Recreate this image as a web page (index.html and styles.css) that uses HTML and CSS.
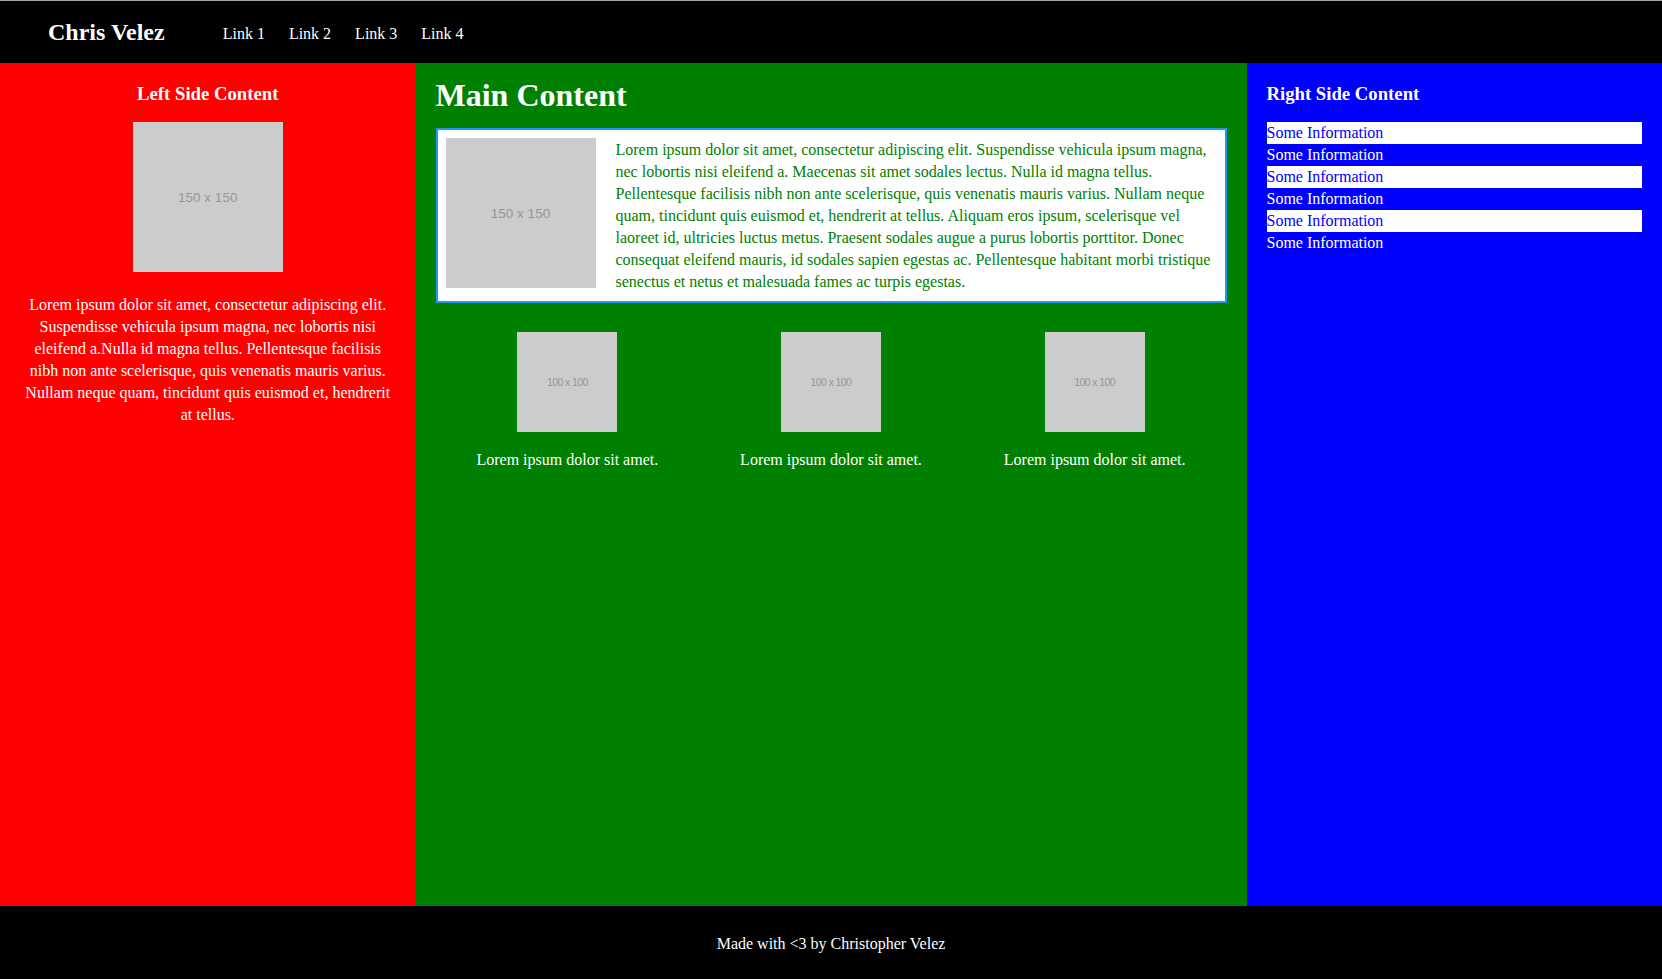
FILE: index.html
```html
<!DOCTYPE html>
<html lang="en">
<head>
<meta charset="utf-8">
<title>Chris Velez</title>
<link rel="stylesheet" href="styles.css">
</head>
<body>
<header class="site-header">
  <div class="logo">Chris Velez</div>
  <nav class="nav">
    <a href="#" class="nav-link">Link 1</a>
    <a href="#" class="nav-link">Link 2</a>
    <a href="#" class="nav-link">Link 3</a>
    <a href="#" class="nav-link">Link 4</a>
  </nav>
</header>
<main class="layout">
  <aside class="col col-left">
    <h3 class="side-title">Left Side Content</h3>
    <div class="ph ph-150">150 x 150</div>
    <p class="left-text">Lorem ipsum dolor sit amet, consectetur adipiscing elit. Suspendisse vehicula ipsum magna, nec lobortis nisi eleifend a.Nulla id magna tellus. Pellentesque facilisis nibh non ante scelerisque, quis venenatis mauris varius. Nullam neque quam, tincidunt quis euismod et, hendrerit at tellus.</p>
  </aside>
  <section class="col col-main">
    <h1 class="main-title">Main Content</h1>
    <div class="card">
      <div class="ph ph-150 card-img">150 x 150</div>
      <p class="card-text">Lorem ipsum dolor sit amet, consectetur adipiscing elit. Suspendisse vehicula ipsum magna, nec lobortis nisi eleifend a. Maecenas sit amet sodales lectus. Nulla id magna tellus. Pellentesque facilisis nibh non ante scelerisque, quis venenatis mauris varius. Nullam neque quam, tincidunt quis euismod et, hendrerit at tellus. Aliquam eros ipsum, scelerisque vel laoreet id, ultricies luctus metus. Praesent sodales augue a purus lobortis porttitor. Donec consequat eleifend mauris, id sodales sapien egestas ac. Pellentesque habitant morbi tristique senectus et netus et malesuada fames ac turpis egestas.</p>
    </div>
    <div class="features">
      <div class="feature">
        <div class="ph ph-100">100 x 100</div>
        <p class="feature-text">Lorem ipsum dolor sit amet.</p>
      </div>
      <div class="feature">
        <div class="ph ph-100">100 x 100</div>
        <p class="feature-text">Lorem ipsum dolor sit amet.</p>
      </div>
      <div class="feature">
        <div class="ph ph-100">100 x 100</div>
        <p class="feature-text">Lorem ipsum dolor sit amet.</p>
      </div>
    </div>
  </section>
  <aside class="col col-right">
    <h3 class="side-title">Right Side Content</h3>
    <ul class="info-list">
      <li class="info-item">Some Information</li>
      <li class="info-item">Some Information</li>
      <li class="info-item">Some Information</li>
      <li class="info-item">Some Information</li>
      <li class="info-item">Some Information</li>
      <li class="info-item">Some Information</li>
    </ul>
  </aside>
</main>
<footer class="site-footer">Made with &lt;3 by Christopher Velez</footer>
</body>
</html>
```
FILE: styles.css
```css
* { box-sizing: border-box; }

html, body { height: 100%; }

body {
  margin: 0;
  min-height: 100vh;
  display: flex;
  flex-direction: column;
  font-family: "Liberation Serif", "Times New Roman", serif;
  font-size: 16px;
  color: #fff;
  background: #000;
}

.site-header {
  height: 63px;
  flex-shrink: 0;
  border-top: 1px solid #a3a3a3;
  background: #000;
  display: flex;
  align-items: center;
  padding: 0 0 0 48px;
}

.logo {
  font-size: 24px;
  font-weight: bold;
  color: #fff;
}

.nav {
  margin-left: 58px;
  padding-top: 3px;
  display: flex;
  gap: 24px;
}

.nav-link {
  color: #fff;
  text-decoration: none;
  font-size: 16px;
}

.layout {
  flex: 1;
  display: grid;
  grid-template-columns: 1fr 2fr 1fr;
}

.col { padding: 20px; }

.col-left {
  background: #ff0000;
  text-align: center;
}

.col-main {
  background: #008000;
  padding-top: 0;
}

.col-right {
  background: #0000ff;
}

.side-title {
  margin: 0 0 17px;
  font-size: 18.72px;
  font-weight: bold;
}

.ph {
  background: #cccccc;
  color: #969696;
  font-family: "Liberation Sans", Arial, sans-serif;
  display: flex;
  align-items: center;
  justify-content: center;
  flex-shrink: 0;
}

.ph-150 {
  width: 150px;
  height: 150px;
  font-size: 13.5px;
  margin: 0 auto;
}

.ph-100 {
  width: 100px;
  height: 100px;
  font-size: 10.5px;
  letter-spacing: -0.6px;
  margin: 0 auto;
}

.left-text {
  margin: 22px 0 0;
  line-height: 22px;
}

.main-title {
  font-size: 32px;
  margin: 14px 0 14px;
}

.card {
  display: flex;
  gap: 20px;
  background: #fff;
  border: 2px solid #2196f3;
  padding: 8px;
}

.card-img { margin: 0; }

.card-text {
  margin: 1px 0 0;
  color: #008000;
  line-height: 22px;
}

.features {
  display: grid;
  grid-template-columns: repeat(3, 1fr);
  margin-top: 29px;
  text-align: center;
}

.feature-text {
  margin: 17px 0 0;
  line-height: 22px;
}

.info-list {
  list-style: none;
  margin: 0;
  padding: 0;
}

.info-item {
  line-height: 22px;
  color: #fff;
}

.info-item:nth-child(odd) {
  background: #fff;
  color: #0000ff;
}

.site-footer {
  height: 73px;
  flex-shrink: 0;
  background: #000;
  color: #fff;
  display: flex;
  align-items: center;
  justify-content: center;
  padding-top: 3px;
}
```
